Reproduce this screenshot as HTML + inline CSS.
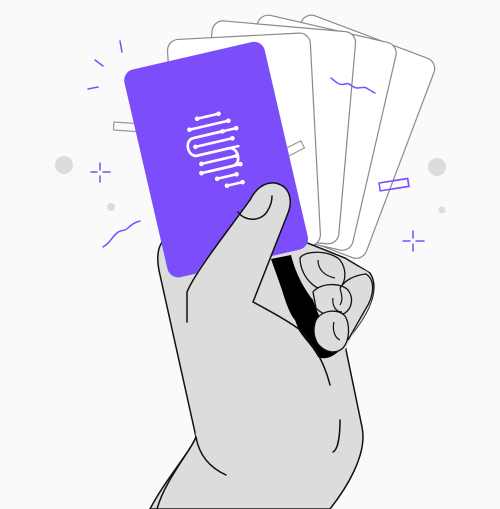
<!DOCTYPE html>
<html><head><style>html,body{margin:0;padding:0;background:#fafafa}svg{display:block}</style></head>
<body>
<svg width="500" height="509" viewBox="0 0 500 509" xmlns="http://www.w3.org/2000/svg">
<rect width="500" height="509" fill="#fafafa"/>
<!-- decorations -->
<circle cx="64" cy="165" r="9" fill="#dcdcdc"/>
<circle cx="437" cy="167" r="9" fill="#dcdcdc"/>
<circle cx="111" cy="207" r="4" fill="#dcdcdc"/>
<circle cx="442" cy="210" r="3.5" fill="#dcdcdc"/>
<g stroke="#7c4dff" stroke-width="1.5" fill="none" stroke-linecap="round">
<path d="M100,163V170M100,176V182M91,172H97M103,172H110"/>
<path d="M413,231V238M413,244V251M403,241H410M416,241H424"/>
<path d="M120,41L122,52M95,60L103,66M88,89L98,87"/>
<path d="M103,247C110,243 112,237 117,233C121,229 124,232 128,228C132,224 136,222 140,221"/>
<path d="M331,78C336,82 340,86 345,84C350,82 352,88 357,88C362,88 364,86 368,89C372,91 374,93 375,93"/>
<rect x="0" y="0" width="29" height="8" transform="translate(379,183) rotate(-9)"/>
</g>
<g stroke="#999" stroke-width="1.2" fill="none">
<rect x="0" y="0" width="30" height="8" transform="translate(114,122) rotate(4)"/>
<rect x="0" y="0" width="29" height="8" transform="translate(275,154) rotate(-27)"/>
</g>
<!-- back cards -->
<g fill="#fff" stroke="#8a8a8a" stroke-width="1.2">
<rect width="142" height="213" rx="11" transform="translate(305,12) rotate(20.7)"/>
<rect width="142" height="213" rx="11" transform="translate(260,13) rotate(13)"/>
<rect width="144" height="213" rx="11" transform="translate(213,20) rotate(5)"/>
<rect width="143" height="213" rx="11" transform="translate(167,40) rotate(-3)"/>
</g>
<g stroke="#999" stroke-width="1.2" fill="none">
<rect x="0" y="0" width="29" height="8" transform="translate(275,154) rotate(-27)"/>
</g>
<g stroke="#7c4dff" stroke-width="1.5" fill="none" stroke-linecap="round">
<path d="M331,78C336,82 340,86 345,84C350,82 352,88 357,88C362,88 364,86 368,89C372,91 374,93 375,93"/>
<rect x="0" y="0" width="29" height="8" transform="translate(379,183) rotate(-9)"/>
</g>
<!-- palm + fist base -->
<path d="M150,509 C165,480 190,452 196,437 L160,275 C154,250 160,235 180,232 L300,240 L345,258 L370,273 C378,285 374,305 355,330 L345,345 L362,427 C368,455 345,490 330,509 Z" fill="#dcdcdc" stroke="#111" stroke-width="1.5"/>
<!-- purple card -->
<rect width="144" height="213" rx="11" fill="#7c4dfa" transform="translate(122,72) rotate(-13)"/>
<!-- logo -->
<g transform="translate(213,152) rotate(-13)" stroke="#fff" stroke-width="2.6" fill="none" stroke-linecap="round">
<path d="M-8,-36H14M-18,-27H22M-2,-18H28M-16,-9H22M-18,0H26M-14,9H22M-8,18H24M-2,27H18M6,36H22"/>
<path d="M14,-18H-16C-26,-18 -26,0 -16,0H16C26,0 26,18 16,18H-16"/>
<g fill="#fff" stroke="none">
<circle cx="-8" cy="-36" r="2.3"/><circle cx="14" cy="-36" r="2.3"/>
<circle cx="-18" cy="-27" r="2.3"/><circle cx="22" cy="-27" r="2.3"/>
<circle cx="28" cy="-18" r="2.3"/><circle cx="14" cy="-18" r="2.3"/>
<circle cx="-16" cy="-9" r="2.3"/><circle cx="22" cy="-9" r="2.3"/>
<circle cx="-14" cy="9" r="2.3"/><circle cx="22" cy="9" r="2.3"/>
<circle cx="-16" cy="18" r="2.3"/><circle cx="24" cy="18" r="2.3"/>
<circle cx="-2" cy="27" r="2.3"/><circle cx="18" cy="27" r="2.3"/>
<circle cx="6" cy="36" r="2.3"/><circle cx="22" cy="36" r="2.3"/>
</g>
</g>
<!-- fist (front of back cards) -->
<path d="M288,255 C300,250 320,250 338,256 L368,272 C378,285 374,305 355,330 L345,350 L320,360 L290,320 Z" fill="#dcdcdc"/>
<!-- black gap -->
<path d="M271,259 L291,255 C296,275 305,290 313,300 C318,315 325,330 338,345 L338,352 C332,357 325,360 318,357 C312,345 300,335 298,328 L295,320 C290,315 285,300 282,290 Z" fill="#000"/>
<!-- finger outlines -->
<g fill="#dcdcdc" stroke="#111" stroke-width="1.3">
<path d="M300,258 C305,250 330,250 340,260 C346,268 347,280 340,288 C330,292 318,290 312,284 C305,278 300,268 300,258 Z"/>
<path d="M313,292 C320,283 340,282 348,290 C354,298 352,308 345,313 C335,318 322,315 316,308 Z"/>
<path d="M316,320 C322,310 338,308 345,316 C350,324 350,340 343,348 C335,355 325,352 318,344 C313,336 313,328 316,320 Z"/>
<path d="M340,288 C345,280 355,275 366,274 C375,280 375,295 365,310 L348,340" fill="none"/>
</g>
<g stroke="#111" stroke-width="1.2" fill="none">
<path d="M318,260 C318,270 325,276 335,278"/>
<path d="M340,288 C342,296 343,300 340,305"/>
<path d="M333,298 C332,306 336,312 342,312"/>
<path d="M334,322 C332,330 335,338 340,340"/>
</g>
<!-- thumb -->
<path d="M187,325 L187,290 C195,270 230,228 250,200 C256,188 265,182 275,183 C290,186 293,200 288,213 L253,302 L298,330 L326,368 L330,385 L196,437 Z" fill="#dcdcdc"/>
<g stroke="#111" stroke-width="1.5" fill="none" stroke-linecap="round">
<path d="M187,322 L187,292 C195,272 230,228 250,200 C256,188 265,182 275,183 C290,186 293,200 288,213 L253,302 C268,310 290,322 300,330 C315,345 325,365 330,385"/>
<path d="M238,212 C245,222 262,222 268,210 C271,205 272,200 272,196"/>
<path d="M340,420 C340,440 337,450 333,452"/>
<path d="M196,437 C200,460 215,470 226,475"/>
<path d="M157,509 C165,480 190,452 196,437"/>
</g>
</svg>
</body></html>
